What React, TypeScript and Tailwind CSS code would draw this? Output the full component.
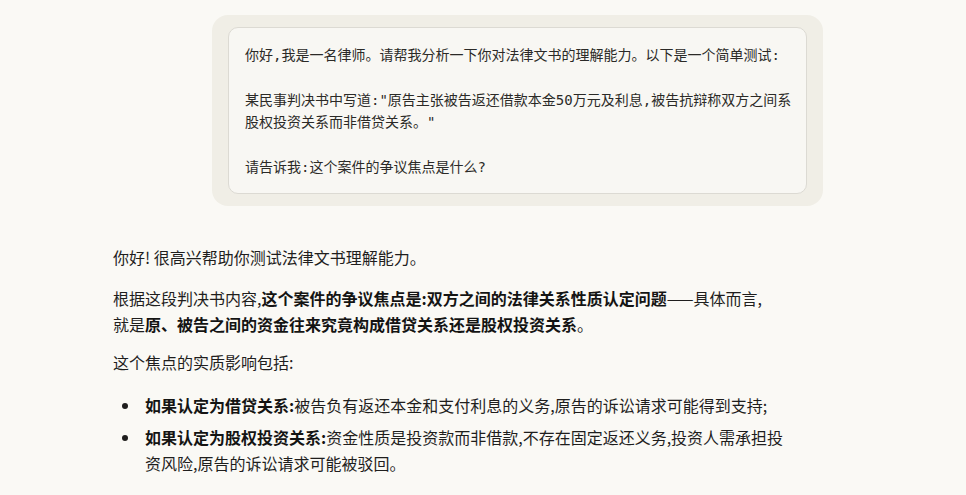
const mono = "font-['DejaVu_Sans_Mono','Noto_Sans_CJK_SC',monospace]";
const sans = "font-['Noto_Sans_CJK_SC','Noto_Sans',sans-serif]";

const UserMessage = () => (
  <div className="flex justify-end">
    <div className="w-[611px] rounded-2xl bg-[#f0eee6] px-4 py-3">
      <div
        className={`rounded-[10px] border border-[#dcdad3] bg-[#f8f7f3] px-4 pt-4 pb-[15px] text-[14px] leading-[22.4px] whitespace-nowrap text-[#2b2a27] ${mono}`}
      >
        <p>你好,我是一名律师。请帮我分析一下你对法律文书的理解能力。以下是一个简单测试:</p>
        <p className="mt-[22.4px]">
          某民事判决书中写道:"原告主张被告返还借款本金50万元及利息,被告抗辩称双方之间系
          <br />
          股权投资关系而非借贷关系。"
        </p>
        <p className="mt-[22.4px]">请告诉我:这个案件的争议焦点是什么?</p>
      </div>
    </div>
  </div>
);

const AssistantMessage = () => (
  <div className={`mt-[39px] w-[710px] whitespace-nowrap text-[16px] leading-[25.6px] text-[#1f1e1d] ${sans}`}>
    <p>你好! 很高兴帮助你测试法律文书理解能力。</p>
    <p className="mt-[15px]">
      根据这段判决书内容,
      <strong className="font-bold text-[#141413]">
        这个案件的争议焦点是:双方之间的法律关系性质认定问题
      </strong>
      ——具体而言,
      <br />
      就是
      <strong className="font-bold text-[#141413]">
        原、被告之间的资金往来究竟构成借贷关系还是股权投资关系
      </strong>
      。
    </p>
    <p className="mt-[13px]">这个焦点的实质影响包括:</p>
    <ul className="mt-[17px] space-y-[7px] pl-8">
      <li className="relative">
        <span className="absolute -left-[23px] top-[10px] h-[6px] w-[6px] rounded-full bg-[#1f1e1d]" />
        <strong className="font-bold text-[#141413]">如果认定为借贷关系:</strong>
        被告负有返还本金和支付利息的义务,原告的诉讼请求可能得到支持;
      </li>
      <li className="relative">
        <span className="absolute -left-[23px] top-[10px] h-[6px] w-[6px] rounded-full bg-[#1f1e1d]" />
        <strong className="font-bold text-[#141413]">如果认定为股权投资关系:</strong>
        资金性质是投资款而非借款,不存在固定返还义务,投资人需承担投
        <br />
        资风险,原告的诉讼请求可能被驳回。
      </li>
    </ul>
  </div>
);

export default function App() {
  return (
    <div className="h-[495px] w-full overflow-hidden bg-[#faf9f5]">
      <div className="ml-[113px] w-[710px] pt-[15px]">
        <UserMessage />
        <AssistantMessage />
      </div>
    </div>
  );
}
